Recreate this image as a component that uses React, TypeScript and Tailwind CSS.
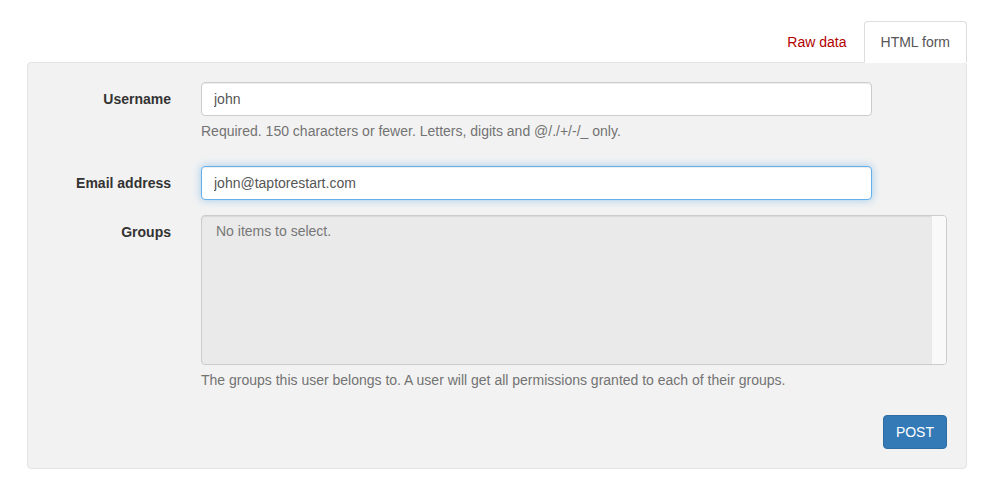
import React from 'react';

const font = { fontFamily: '"Liberation Sans", Arial, sans-serif' };

const FieldLabel: React.FC<{ children: React.ReactNode }> = ({ children }) => (
  <label className="w-[154px] shrink-0 px-[15px] pt-[7px] text-right text-[14px] font-bold leading-5 text-[#333]">
    {children}
  </label>
);

const HelpText: React.FC<{ children: React.ReactNode }> = ({ children }) => (
  <p className="mt-[5px] mb-[10px] text-[14px] leading-5 text-[#737373]">{children}</p>
);

export default function App() {
  return (
    <div className="min-h-[493px] bg-white text-[14px] text-[#333]" style={font}>
      <div className="ml-[27px] w-[940px] pt-[21px]">
        <ul className="flex justify-end">
          <li className="-mb-px">
            <a className="block px-[16px] py-[10px] leading-5 text-[#b20000] border border-transparent">Raw data</a>
          </li>
          <li className="-mb-px">
            <a className="block rounded-t-[4px] border border-[#ddd] border-b-transparent bg-white px-4 py-[10px] leading-5 text-[#555]">
              HTML form
            </a>
          </li>
        </ul>

        <div className="rounded-[4px] border border-[#e3e3e3] bg-[#f2f2f2] p-[19px]">
          <form className="-mx-[15px]">
            <div className="mb-[15px] flex">
              <FieldLabel>Username</FieldLabel>
              <div className="flex-1 px-[15px]">
                <input
                  readOnly
                  value="john"
                  className="block h-[34px] w-[671px] rounded-[4px] border border-[#ccc] bg-white px-3 py-[6px] text-[14px] text-[#555] shadow-[inset_0_1px_1px_rgba(0,0,0,0.075)] outline-none"
                />
                <HelpText>Required. 150 characters or fewer. Letters, digits and @/./+/-/_ only.</HelpText>
              </div>
            </div>

            <div className="mb-[15px] flex">
              <FieldLabel>Email address</FieldLabel>
              <div className="flex-1 px-[15px]">
                <input
                  readOnly
                  value="john@taptorestart.com"
                  className="block h-[34px] w-[671px] rounded-[4px] border border-[#66afe9] bg-white px-3 py-[6px] text-[14px] text-[#555] shadow-[inset_0_1px_1px_rgba(0,0,0,0.075),0_0_8px_rgba(102,175,233,0.6)] outline-none"
                />
              </div>
            </div>

            <div className="flex">
              <FieldLabel>Groups</FieldLabel>
              <div className="flex-1 px-[15px]">
                <div className="flex h-[150px] overflow-hidden rounded-[4px] border border-[#ccc] bg-[#eaeaea] shadow-[inset_0_1px_1px_rgba(0,0,0,0.075)]">
                  <div className="flex-1 px-[14px] pt-[5px] leading-5 text-[#777]">No items to select.</div>
                  <div className="w-[15px] border-l border-[#e8e8e8] bg-[#f9f9f9]" />
                </div>
                <HelpText>The groups this user belongs to. A user will get all permissions granted to each of their groups.</HelpText>
              </div>
            </div>

            <div className="flex justify-end px-[15px] pt-[15px]">
              <button
                type="button"
                className="h-[34px] rounded-[4px] border border-[#2e6da4] bg-[#337ab7] px-3 text-[14px] leading-5 text-white"
              >
                POST
              </button>
            </div>
          </form>
        </div>
      </div>
    </div>
  );
}
